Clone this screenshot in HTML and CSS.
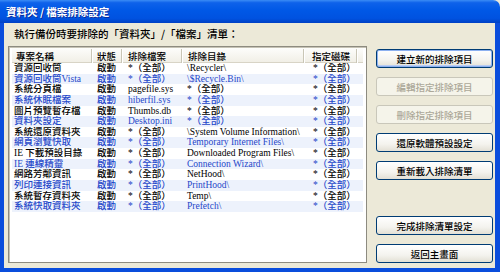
FILE: index.html
```html
<!DOCTYPE html>
<html lang="zh-Hant">
<head>
<meta charset="UTF-8">
<meta name="viewport" content="width=device-width, initial-scale=1.0">
<title>資料夾 / 檔案排除設定</title>
<link rel="stylesheet" href="styles.css">
</head>
<body>
<div class="window">
  <div class="titlebar">資料夾 / 檔案排除設定</div>

  <div class="frame">
    <div class="caption">執行備份時要排除的「資料夾」/「檔案」清單：</div>

    <div class="main">
      <div class="listbox">
        <div class="head">
          <div class="c1">專案名稱</div>
          <div class="c2">狀態</div>
          <div class="c3">排除檔案</div>
          <div class="c4">排除目錄</div>
          <div class="c5">指定磁碟</div>
        </div>

        <div class="row"><div class="c1">資源回收筒</div><div class="c2">啟動</div><div class="c3">*（全部）</div><div class="c4">\Recycler\</div><div class="c5">*（全部）</div></div>
        <div class="row alt"><div class="c1">資源回收筒Vista</div><div class="c2">啟動</div><div class="c3">*（全部）</div><div class="c4">\$Recycle.Bin\</div><div class="c5">*（全部）</div></div>
        <div class="row"><div class="c1">系統分頁檔</div><div class="c2">啟動</div><div class="c3">pagefile.sys</div><div class="c4">*（全部）</div><div class="c5">*（全部）</div></div>
        <div class="row alt"><div class="c1">系統休眠檔案</div><div class="c2">啟動</div><div class="c3">hiberfil.sys</div><div class="c4">*（全部）</div><div class="c5">*（全部）</div></div>
        <div class="row"><div class="c1">圖片預覽暫存檔</div><div class="c2">啟動</div><div class="c3">Thumbs.db</div><div class="c4">*（全部）</div><div class="c5">*（全部）</div></div>
        <div class="row alt"><div class="c1">資料夾設定</div><div class="c2">啟動</div><div class="c3">Desktop.ini</div><div class="c4">*（全部）</div><div class="c5">*（全部）</div></div>
        <div class="row"><div class="c1">系統還原資料夾</div><div class="c2">啟動</div><div class="c3">*（全部）</div><div class="c4">\System Volume Information\</div><div class="c5">*（全部）</div></div>
        <div class="row alt"><div class="c1">網頁瀏覽快取</div><div class="c2">啟動</div><div class="c3">*（全部）</div><div class="c4">Temporary Internet Files\</div><div class="c5">*（全部）</div></div>
        <div class="row"><div class="c1">IE 下載預設目錄</div><div class="c2">啟動</div><div class="c3">*（全部）</div><div class="c4">Downloaded Program Files\</div><div class="c5">*（全部）</div></div>
        <div class="row alt"><div class="c1">IE 連線精靈</div><div class="c2">啟動</div><div class="c3">*（全部）</div><div class="c4">Connection Wizard\</div><div class="c5">*（全部）</div></div>
        <div class="row"><div class="c1">網路芳鄰資訊</div><div class="c2">啟動</div><div class="c3">*（全部）</div><div class="c4">NetHood\</div><div class="c5">*（全部）</div></div>
        <div class="row alt"><div class="c1">列印連接資訊</div><div class="c2">啟動</div><div class="c3">*（全部）</div><div class="c4">PrintHood\</div><div class="c5">*（全部）</div></div>
        <div class="row"><div class="c1">系統暫存資料夾</div><div class="c2">啟動</div><div class="c3">*（全部）</div><div class="c4">Temp\</div><div class="c5">*（全部）</div></div>
        <div class="row alt"><div class="c1">系統快取資料夾</div><div class="c2">啟動</div><div class="c3">*（全部）</div><div class="c4">Prefetch\</div><div class="c5">*（全部）</div></div>
      </div>

      <div class="btns">
        <button class="btn default">建立新的排除項目</button>
        <button class="btn" disabled>編輯指定排除項目</button>
        <button class="btn" disabled>刪除指定排除項目</button>
        <button class="btn">還原軟體預設設定</button>
        <button class="btn">重新載入排除清單</button>
        <button class="btn push">完成排除清單設定</button>
        <button class="btn">返回主畫面</button>
      </div>
    </div>
  </div>
</div>
</body>
</html>
```

FILE: styles.css
```css
body {
  margin: 0;
  width: 500px;
  height: 272px;
  overflow: hidden;
  background: #ece9d8;
  font-family: "Noto Sans CJK TC", "Liberation Sans", sans-serif;
}

.window {
  width: 500px;
  height: 272px;
  display: flex;
  flex-direction: column;
}

.titlebar {
  flex: none;
  height: 23px;
  padding-left: 6px;
  display: flex;
  align-items: center;
  color: #fff;
  font-size: 10.5px;
  font-weight: bold;
  text-shadow: 1px 1px 0 #0c2a9a;
  border-top-right-radius: 7px;
  background: linear-gradient(to bottom, #3b8cf5 0%, #0e62ea 12%, #0058e6 45%, #0052e0 80%, #0040c4 100%);
}

.frame {
  flex: 1;
  display: flex;
  flex-direction: column;
  min-height: 0;
  background: #ece9d8;
  border: solid #0a4ddc;
  border-width: 0 5px 4px 4px;
  padding: 0 2px 5px 4px;
}

.caption {
  flex: none;
  height: 20px;
  padding: 0 0 3px 6px;
  display: flex;
  align-items: center;
  font-size: 10.5px;
  font-weight: 500;
  color: #000;
}

.main {
  flex: 1;
  display: flex;
  gap: 9px;
  min-height: 0;
}

/* list view */
.listbox {
  width: 351px;
  background: #fff;
  border: 1px solid #8d8b80;
  box-shadow: inset 1px 1px 0 #c6c3b5;
  padding: 1px 3px;
}

.head,
.row {
  display: grid;
  grid-template-columns: 80px 30px 60px 122px 53px;
}

.head {
  height: 15px;
  font-size: 9.5px;
  font-weight: 500;
  line-height: 14px;
  color: #000;
  background: linear-gradient(to bottom, #fdfdfb, #f1efe6);
  border-bottom: 1px solid #d8d4c6;
  box-sizing: border-box;
}

.head div {
  border-right: 1px solid #c9c6b6;
  box-shadow: 1px 0 0 #fff;
  margin: 1px 0 2px;
}

.head .c1 { padding-left: 4px; }
.head .c2 { padding-left: 5px; }
.head .c3 { padding-left: 6px; }
.head .c4 { padding-left: 6px; }
.head .c5 { padding-left: 8px; }

.row {
  height: 10.65px;
  line-height: 10.65px;
  font-size: 9.5px;
  font-weight: 500;
  font-family: "Liberation Serif", "Noto Sans CJK TC", serif;
  color: #000;
}

.row div {
  white-space: nowrap;
  overflow: hidden;
}

.row .c1 { padding-left: 2px; }
.row .c2 { padding-left: 5px; }
.row .c3 { padding-left: 6px; }
.row .c4 { padding-left: 5px; }
.row .c5 { padding-left: 9px; }

.row.alt {
  color: #1f47c9;
  background: #edf2fc;
}

/* buttons */
.btns {
  width: 117px;
  display: flex;
  flex-direction: column;
  gap: 9px;
  padding-top: 3px;
}

.btn {
  height: 19px;
  padding: 0;
  font-family: "Noto Sans CJK TC", sans-serif;
  font-size: 9.5px;
  font-weight: 500;
  color: #000;
  border: 1px solid #003c74;
  border-radius: 3px;
  background: linear-gradient(to bottom, #ffffff 0%, #f4f3ee 60%, #e3e0d5 100%);
}

.btn.default {
  box-shadow: inset 0 0 0 1px #8cb0f0, inset 0 -1px 0 1px #b9cdf3;
}

.btn:disabled {
  color: #aca899;
  border-color: #c9c7ba;
  background: #f5f4ea;
}

.btn.push {
  margin-top: auto;
}
```
